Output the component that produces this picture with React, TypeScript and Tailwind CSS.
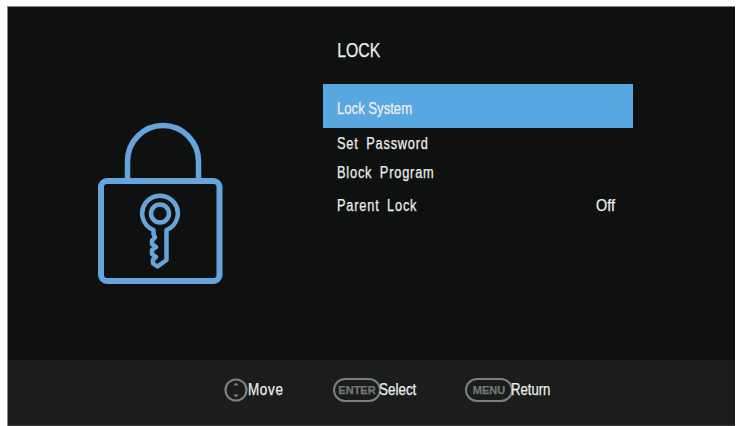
const menuItems = [
  { label: "Set Password", row: "h-[31px]" },
  { label: "Block Program", row: "h-[28px]" },
  { label: "Parent Lock", value: "Off", row: "h-[38px]" },
];

function LockIcon() {
  return (
    <svg
      width="126"
      height="164"
      viewBox="0 0 126 164"
      fill="none"
      stroke="#65a5dc"
      strokeLinejoin="round"
      strokeLinecap="round"
    >
      <path d="M30.500 59V39.500a35.500 36 0 0 1 71 0V59" strokeWidth="5.500" strokeLinecap="butt" />
      <rect x="4" y="59" width="118.500" height="100" rx="6" strokeWidth="6" />
      <circle cx="63" cy="91.500" r="9" strokeWidth="4.500" />
      <path
        d="M56.500 108A17.800 17.800 0 1 1 69.500 108V138L60.500 144.500L56 141.500V137.500L59 135L55 132V128L59 125L55 122V118.500L58 115.500L56.500 112Z"
        strokeWidth="4.500"
      />
    </svg>
  );
}

function ArrowsKey() {
  return (
    <svg width="24" height="24" viewBox="0 0 24 24" fill="none" stroke="#7d807f" strokeWidth="2.200">
      <circle cx="12" cy="12" r="10.500" />
      <path d="M9.500 7.500L12 4.500l2.500 3zM9.500 16.500l2.500 3l2.500-3z" fill="#7d807f" stroke="none" />
    </svg>
  );
}

function KeyCap({ children }: { children: string }) {
  return (
    <span className="flex h-6 w-12 shrink-0 items-center justify-center rounded-full border-2 border-[#7d807f] text-[11px] font-bold text-[#747776]">
      {children}
    </span>
  );
}

function App() {
  return (
    <div className="h-[426px] w-[737px] overflow-hidden bg-white pt-1.5 pl-[7px] font-['Liberation_Sans',sans-serif] text-[#eeeeee] [-webkit-text-stroke:0.25px]">
      <div className="flex h-[420px] w-[728px] flex-col border-t border-l border-[#858585] bg-[#0e1110]">
        <main className="flex h-[353px]">
          <div className="w-[315px] pt-[115px] pl-[89px]">
            <LockIcon />
          </div>
          <div className="w-[310px] pt-7">
            <h1 className="flex h-[49px] origin-left scale-x-[0.79] pl-[18px] text-[20px] leading-[30px]">
              LOCK
            </h1>
            <div className="flex h-11 items-center bg-[#58a7e1] pt-1.5 pl-[14px]">
              <span className="origin-left scale-x-[0.82] text-base">Lock System</span>
            </div>
            <ul>
              {menuItems.map((item) => (
                <li
                  key={item.label}
                  className={`flex items-center justify-between pr-[18px] pl-[14px] text-base ${item.row}`}
                >
                  <span className="origin-left scale-x-[0.8] tracking-[1px] whitespace-nowrap [word-spacing:4px]">
                    {item.label}
                  </span>
                  {item.value && (
                    <span className="origin-right scale-x-[0.9] text-base">{item.value}</span>
                  )}
                </li>
              ))}
            </ul>
          </div>
        </main>
        <footer className="flex flex-1 border-b border-[#383838] bg-[#1a1d1c] pt-[18px] pl-[216px] text-base">
          <div className="flex h-6 w-[109px] items-center">
            <ArrowsKey />
            <span className="origin-left scale-x-[0.84] tracking-[0.8px]">Move</span>
          </div>
          <div className="flex h-6 w-[132px] items-center">
            <KeyCap>ENTER</KeyCap>
            <span className="-ml-0.5 origin-left scale-x-[0.84]">Select</span>
          </div>
          <div className="flex h-6 items-center">
            <KeyCap>MENU</KeyCap>
            <span className="-ml-0.5 origin-left scale-x-[0.82]">Return</span>
          </div>
        </footer>
      </div>
    </div>
  );
}

export default App;
